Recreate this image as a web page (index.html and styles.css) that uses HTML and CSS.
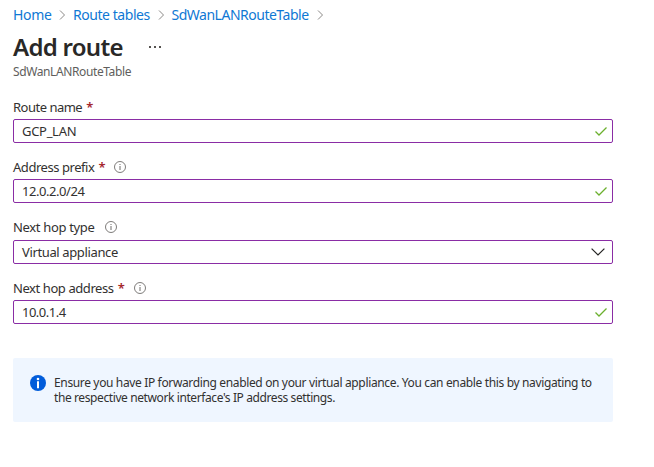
FILE: index.html
```html
<!DOCTYPE html>
<html lang="en">
<head>
<meta charset="utf-8">
<title>Add route</title>
<link rel="stylesheet" href="styles.css">
</head>
<body>
<svg class="defs" width="0" height="0" aria-hidden="true">
  <symbol id="sep" viewBox="0 0 7 10"><path d="M1 .5 5.5 5 1 9.5" fill="none" stroke="#8a8886"/></symbol>
  <symbol id="info" viewBox="0 0 12 12"><circle cx="6" cy="6" r="5.5" fill="none" stroke="#6f6d6b" stroke-width=".9"/><path d="M6 5v4M6 3v1" stroke="#6f6d6b"/></symbol>
  <symbol id="check" viewBox="0 0 12 9"><path d="M.5 4.5 4 8 11.5.5" fill="none" stroke="#6bb02e" stroke-width="1.25"/></symbol>
</svg>
<nav class="crumbs">
  <a class="home">Home</a><svg class="sep"><use href="#sep"/></svg>
  <a class="tables">Route tables</a><svg class="sep"><use href="#sep"/></svg>
  <a class="current">SdWanLANRouteTable</a><svg class="sep"><use href="#sep"/></svg>
</nav>
<header class="heading">
  <h1>Add route</h1>
  <svg class="more" viewBox="0 0 12 2"><path d="M0 0h2v2H0zM5 0h2v2H5zM10 0h2v2h-2z" fill="#55524f"/></svg>
</header>
<p class="subtitle">SdWanLANRouteTable</p>
<main class="form">
  <div class="field">
    <div class="label"><span class="l-name">Route name</span><b>*</b></div>
    <div class="box"><span class="v-name">GCP_LAN</span><svg class="check"><use href="#check"/></svg></div>
  </div>
  <div class="field">
    <div class="label"><span class="l-prefix">Address prefix</span><b>*</b><svg class="info"><use href="#info"/></svg></div>
    <div class="box"><span class="v-prefix">12.0.2.0/24</span><svg class="check"><use href="#check"/></svg></div>
  </div>
  <div class="field select">
    <div class="label"><span class="l-type">Next hop type</span><svg class="info"><use href="#info"/></svg></div>
    <div class="box"><span class="v-type">Virtual appliance</span><svg class="chevron" viewBox="0 0 14 8"><path d="M.6.6 7 7 13.4.6" fill="none" stroke="#252423" stroke-width="1.2"/></svg></div>
  </div>
  <div class="field">
    <div class="label"><span class="l-address">Next hop address</span><b>*</b><svg class="info"><use href="#info"/></svg></div>
    <div class="box"><span class="v-address">10.0.1.4</span><svg class="check"><use href="#check"/></svg></div>
  </div>
</main>
<aside class="notice">
  <svg class="badge" viewBox="0 0 16 16"><circle cx="8" cy="8" r="8" fill="#015cda"/><circle cx="8" cy="4" r="1.3" fill="#fff"/><path d="M8 6.3v6.9" stroke="#fff" stroke-width="2"/></svg>
  <p><span class="n1">Ensure you have IP forwarding enabled on your virtual appliance. You can enable this by navigating to</span><span class="n2">the respective network interface's IP address settings.</span></p>
</aside>
</body>
</html>
```
FILE: styles.css
```css
* { box-sizing: border-box; }
body {
  margin: 0;
  padding: 5px 41px 0 13px;
  background: #fff;
  color: #323130;
  font: 13px/20px "Noto Sans", "Open Sans", sans-serif;
}
svg { display: block; flex: none; }
.defs { position: absolute; }
.crumbs { display: flex; align-items: center; height: 20px; color: #0f78d4; font-size: 14px; white-space: nowrap; }
.crumbs a { flex: none; }
.home { width: 46px; letter-spacing: -.35px; }
.tables { width: 84.5px; letter-spacing: -.45px; }
.current { width: 145px; letter-spacing: -.49px; }
.sep { width: 7px; height: 10px; margin-right: 7px; }
.heading { display: flex; align-items: center; height: 38px; margin-top: 3px; }
h1 { width: 136px; margin: 0; font-size: 24px; line-height: 38px; font-weight: 600; letter-spacing: -.72px; color: #292827; white-space: nowrap; }
.more { width: 12px; height: 2px; }
.subtitle { margin: 0; height: 29px; font-size: 12px; line-height: 12px; letter-spacing: -.39px; color: #605e5c; }
.field { height: 60px; }
.field.select { height: 61px; }
.select .label { margin-bottom: 1px; }
.label { display: flex; align-items: center; height: 24px; white-space: nowrap; }
.label b { width: 6px; margin-left: 4px; color: #a4262c; font-weight: 600; }
.info { width: 12px; height: 12px; margin-left: 10px; }
.l-name { letter-spacing: -.5px; }
.l-prefix { letter-spacing: -.45px; }
.l-type { letter-spacing: -.33px; }
.l-address { letter-spacing: -.42px; }
.v-name { letter-spacing: -.3px; }
.v-prefix { letter-spacing: -.45px; }
.v-type { letter-spacing: -.37px; }
.v-address { letter-spacing: -.5px; }
.box { display: flex; align-items: center; justify-content: space-between; height: 24px; padding: 0 5px 0 8px; border: 1px solid #8a2da5; border-radius: 2px; white-space: nowrap; }
.check { width: 12px; height: 9px; }
.chevron { width: 14px; height: 8px; margin-right: 2px; }
.notice { display: flex; gap: 8px; height: 64px; margin-top: 22px; padding: 17px 0 0 17px; background: #eff6ff; border-radius: 2px; font-size: 12px; line-height: 15px; white-space: nowrap; }
.badge { width: 16px; height: 16px; }
.notice p { margin: 0; }
.notice span { display: block; }
.n1 { letter-spacing: -.355px; }
.n2 { letter-spacing: -.4px; }
```
